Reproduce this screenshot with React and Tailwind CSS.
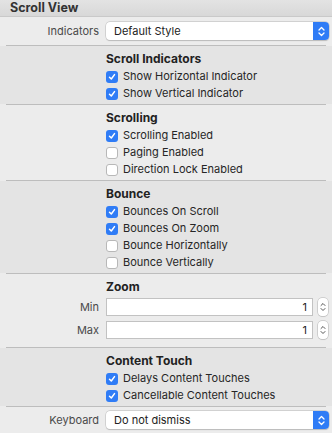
const Check = ({ checked }) =>
  checked ? (
    <span className="flex h-3 w-3 items-center justify-center rounded-[3px] bg-[#2f7cf6]">
      <svg width="8" height="8" viewBox="0 0 8 8">
        <path d="M1.5 4.2 L3.3 6 L6.5 1.6" fill="none" stroke="white" strokeWidth="1.5" strokeLinecap="round" strokeLinejoin="round" />
      </svg>
    </span>
  ) : (
    <span className="h-3 w-3 rounded-[3px] border border-[#b8b8b8] bg-white" />
  );

const Section = ({ title, dark, children }) => (
  <div className={dark ? "bg-[#e4e4e4]" : "bg-[#ececec]"}>
    <div className="pb-[2px] pt-1">
      {title && (
        <div className="ml-[106px] h-[18px] text-[12px] font-bold leading-[17px] text-[#222]">{title}</div>
      )}
      {children}
    </div>
  </div>
);

const Divider = () => (
  <div className="bg-[#ececec]">
    <div className="mx-[6px] h-px bg-[#bdbdbd]" />
  </div>
);

const CheckRow = ({ label, checked }) => (
  <div className="ml-[106px] flex h-[17px] items-center gap-[5px]">
    <Check checked={checked} />
    <span className="text-[11px] text-[#262626]">{label}</span>
  </div>
);

const Popup = ({ label, value }) => (
  <div className="flex items-center">
    <div className="w-[100px] pr-[1px] text-right text-[11px] text-[#4a4a4a]">{label}</div>
    <div className="ml-[6px] flex h-[18px] w-[223px] items-center overflow-hidden rounded-[4px] bg-white shadow-[0_0_0_0.5px_#bcbcbc,0_0.5px_1px_rgba(0,0,0,0.2)]">
      <span className="flex-1 pl-2 text-[11px] text-[#222]">{value}</span>
      <span className="flex h-full w-4 items-center justify-center bg-[#2f7cf6]">
        <svg width="7" height="11" viewBox="0 0 7 11">
          <path d="M1 4 L3.5 1.5 L6 4 M1 7 L3.5 9.5 L6 7" fill="none" stroke="white" strokeWidth="1.3" strokeLinecap="round" strokeLinejoin="round" />
        </svg>
      </span>
    </div>
  </div>
);

const NumberRow = ({ label }) => (
  <div className="flex items-center">
    <div className="w-[100px] pr-[1px] text-right text-[11px] text-[#4a4a4a]">{label}</div>
    <div className="ml-[6px] flex h-[18px] w-[207px] items-center justify-end border border-[#c2c2c2] bg-white pr-[5px] text-[11px] text-[#222]">
      1
    </div>
    <div className="ml-[5px] flex h-[18px] w-[10px] flex-col items-center justify-center rounded-[4px] bg-white shadow-[0_0_0_0.5px_#b5b5b5,0_0.5px_1px_rgba(0,0,0,0.2)]">
      <svg width="6" height="12" viewBox="0 0 6 12">
        <path d="M1 4.5 L3 2.5 L5 4.5 M1 7.5 L3 9.5 L5 7.5" fill="none" stroke="#555" strokeWidth="1" strokeLinecap="round" strokeLinejoin="round" />
      </svg>
    </div>
  </div>
);

export default function App() {
  return (
    <div className="h-[433px] w-[332px] overflow-hidden bg-[#ececec] font-['Inter',sans-serif]">
      <div className="flex h-[17px] items-center border-b border-[#c9c9c9] bg-gradient-to-b from-[#e3e3e3] to-[#d8d8d8] pl-[10px] text-[12.5px] font-bold text-[#333]">
        Scroll View
      </div>
      <div className="bg-[#ececec] pb-[5px] pt-[5px]">
        <Popup label="Indicators" value="Default Style" />
      </div>
      <Divider />
      <Section title="Scroll Indicators" dark>
        <CheckRow label="Show Horizontal Indicator" checked />
        <CheckRow label="Show Vertical Indicator" checked />
      </Section>
      <Divider />
      <Section title="Scrolling">
        <CheckRow label="Scrolling Enabled" checked />
        <CheckRow label="Paging Enabled" />
        <CheckRow label="Direction Lock Enabled" />
      </Section>
      <Divider />
      <Section title="Bounce" dark>
        <CheckRow label="Bounces On Scroll" checked />
        <CheckRow label="Bounces On Zoom" checked />
        <CheckRow label="Bounce Horizontally" />
        <CheckRow label="Bounce Vertically" />
      </Section>
      <Divider />
      <div className="bg-[#ececec] pb-2 pt-1">
        <div className="ml-[106px] h-[17px] text-[12px] font-bold leading-[17px] text-[#222]">Zoom</div>
        <div className="mt-[3px] flex flex-col gap-[5px]">
          <NumberRow label="Min" />
          <NumberRow label="Max" />
        </div>
      </div>
      <Divider />
      <Section title="Content Touch" dark>
        <CheckRow label="Delays Content Touches" checked />
        <CheckRow label="Cancellable Content Touches" checked />
      </Section>
      <Divider />
      <div className="bg-[#ececec] pt-1">
        <Popup label="Keyboard" value="Do not dismiss" />
      </div>
    </div>
  );
}
